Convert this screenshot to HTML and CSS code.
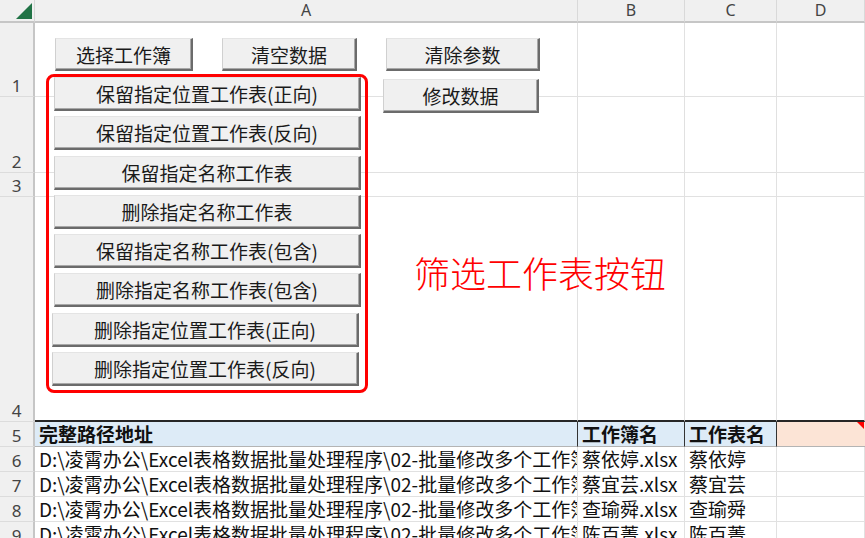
FILE: index.html
```html
<!DOCTYPE html>
<html lang="zh-CN">
<head>
<meta charset="utf-8">
<title>筛选工作表按钮</title>
<link rel="stylesheet" href="styles.css">
</head>
<body>
<div class="sheet">
  <div class="corner"><svg width="16" height="16" viewBox="0 0 16 16"><polygon points="16,0 16,16 0,16" fill="#217346"/></svg></div>
  <div class="ch">A</div>
  <div class="ch">B</div>
  <div class="ch">C</div>
  <div class="ch">D</div>

  <div class="rh">1</div><div class="c"></div><div class="c"></div><div class="c"></div><div class="c"></div>
  <div class="rh">2</div><div class="c"></div><div class="c"></div><div class="c"></div><div class="c"></div>
  <div class="rh">3</div><div class="c"></div><div class="c"></div><div class="c"></div><div class="c"></div>
  <div class="rh">4</div><div class="c r4"></div><div class="c r4"></div><div class="c r4"></div><div class="c r4"></div>

  <div class="rh">5</div>
  <div class="c hd">完整路径地址</div>
  <div class="c hd">工作簿名</div>
  <div class="c hd">工作表名</div>
  <div class="c hd note"></div>

  <div class="rh">6</div>
  <div class="c d">D:\凌霄办公\Excel表格数据批量处理程序\02-批量修改多个工作簿\蔡依婷.xlsx</div>
  <div class="c d">蔡依婷.xlsx</div>
  <div class="c d">蔡依婷</div>
  <div class="c d"></div>

  <div class="rh">7</div>
  <div class="c d">D:\凌霄办公\Excel表格数据批量处理程序\02-批量修改多个工作簿\蔡宜芸.xlsx</div>
  <div class="c d">蔡宜芸.xlsx</div>
  <div class="c d">蔡宜芸</div>
  <div class="c d"></div>

  <div class="rh">8</div>
  <div class="c d">D:\凌霄办公\Excel表格数据批量处理程序\02-批量修改多个工作簿\查瑜舜.xlsx</div>
  <div class="c d">查瑜舜.xlsx</div>
  <div class="c d">查瑜舜</div>
  <div class="c d"></div>

  <div class="rh">9</div>
  <div class="c d">D:\凌霄办公\Excel表格数据批量处理程序\02-批量修改多个工作簿\陈百菁.xlsx</div>
  <div class="c d">陈百菁.xlsx</div>
  <div class="c d">陈百菁</div>
  <div class="c d"></div>

  <div class="shapes">
    <div class="toprow">
      <div class="btn w138">选择工作簿</div>
      <div class="btn w135">清空数据</div>
      <div class="btn w154">清除参数</div>
    </div>
    <div class="mainrow">
      <div class="redbox">
        <div class="btn wide">保留指定位置工作表(正向)</div>
        <div class="btn wide">保留指定位置工作表(反向)</div>
        <div class="btn wide">保留指定名称工作表</div>
        <div class="btn wide">删除指定名称工作表</div>
        <div class="btn wide">保留指定名称工作表(包含)</div>
        <div class="btn wide">删除指定名称工作表(包含)</div>
        <div class="btn wide shift">删除指定位置工作表(正向)</div>
        <div class="btn wide shift">删除指定位置工作表(反向)</div>
      </div>
      <div class="side">
        <div class="btn w156">修改数据</div>
        <div class="label">筛选工作表按钮</div>
      </div>
    </div>
  </div>
</div>
</body>
</html>
```
FILE: styles.css
```css
html, body {
  margin: 0;
  padding: 0;
  background: #ffffff;
  overflow: hidden;
}
body {
  width: 865px;
  height: 538px;
  font-family: "Noto Sans CJK SC", "Noto Sans", sans-serif;
}
.sheet {
  position: relative;
  display: grid;
  grid-template-columns: 35px 543px 107px 92px 88px;
  grid-template-rows: 23px 74px 76px 24px 225px 25px 25px 25px 25px 25px;
}
.sheet > div {
  box-sizing: border-box;
}
.corner {
  background: #f0f0f0;
  border-bottom: 2px solid #c6c6c6;
  border-right: 1px solid #d6d6d6;
  display: flex;
  justify-content: flex-end;
  align-items: flex-end;
  padding: 0 2px 2px 0;
}
.corner svg { display: block; }
.ch {
  background: #f0f0f0;
  border-bottom: 2px solid #c6c6c6;
  border-right: 1px solid #d9d9d9;
  font-family: "Noto Sans", "Noto Sans CJK SC", sans-serif;
  font-size: 16px;
  line-height: 21px;
  color: #444444;
  text-align: center;
}
.rh {
  background: #f0f0f0;
  border-right: 2px solid #c6c6c6;
  border-bottom: 1px solid #dcdcdc;
  font-family: "Noto Sans", "Noto Sans CJK SC", sans-serif;
  font-size: 17px;
  line-height: 20px;
  color: #444444;
  display: flex;
  justify-content: center;
  align-items: flex-end;
  padding-bottom: 0;
}
.c {
  border-right: 1px solid #e1e1e1;
  border-bottom: 1px solid #e1e1e1;
  overflow: hidden;
  white-space: nowrap;
}
.c.r4 {
  border-bottom: 2px solid #262626;
}
.hd {
  background: #ddebf7;
  border-right: 1px solid #333333;
  border-bottom: 1px solid #b4b4b4;
  font-size: 19px;
  font-weight: 700;
  line-height: 24px;
  color: #111111;
  padding-left: 4px;
}
.hd.note {
  position: relative;
  background: #fce4d6;
  border-right: none;
}
.hd.note::after {
  content: "";
  position: absolute;
  top: 0;
  right: 1px;
  border-top: 7px solid #ff0000;
  border-left: 7px solid transparent;
}
.d {
  font-size: 19px;
  line-height: 24px;
  color: #111111;
  padding-left: 4px;
}

/* drawing layer of the sheet */
.shapes {
  position: absolute;
  left: 35px;
  top: 23px;
  width: 820px;
}
.toprow {
  display: flex;
  gap: 29px;
  margin-top: 15px;
  padding-left: 20px;
}
.btn {
  box-sizing: border-box;
  flex-shrink: 0;
  height: 34px;
  background: #f0f0f0;
  border-top: 1px solid #e4e4e4;
  border-left: 1px solid #d0d0d0;
  border-right: 2px solid #6b6b6b;
  border-bottom: 2px solid #6b6b6b;
  box-shadow: inset -1px -1px 0 #a8a8a8;
  font-size: 19px;
  line-height: 1;
  color: #1a1a1a;
  display: flex;
  align-items: center;
  justify-content: center;
  white-space: nowrap;
}
.toprow .btn { height: 33px; }
.w138 { width: 138px; }
.w135 { width: 135px; }
.w154 { width: 154px; }
.w156 { width: 156px; }
.mainrow {
  display: flex;
  align-items: flex-start;
  margin-top: 3px;
  padding-left: 11px;
}
.redbox {
  box-sizing: border-box;
  flex-shrink: 0;
  width: 322px;
  height: 319px;
  border: 3px solid #ff0000;
  border-radius: 8px;
  padding: 0 0 4px 5px;
  display: flex;
  flex-direction: column;
  gap: 5.3px;
}
.btn.wide { width: 307px; }
.btn.shift { margin-left: -2px; }
.side {
  flex-shrink: 0;
  margin-left: 15px;
  margin-top: 5px;
  display: flex;
  flex-direction: column;
  align-items: flex-start;
}
.label {
  margin-top: 141px;
  margin-left: 31px;
  font-size: 36px;
  line-height: 1;
  color: #ff0000;
  white-space: nowrap;
  font-weight: 300;
}
```
